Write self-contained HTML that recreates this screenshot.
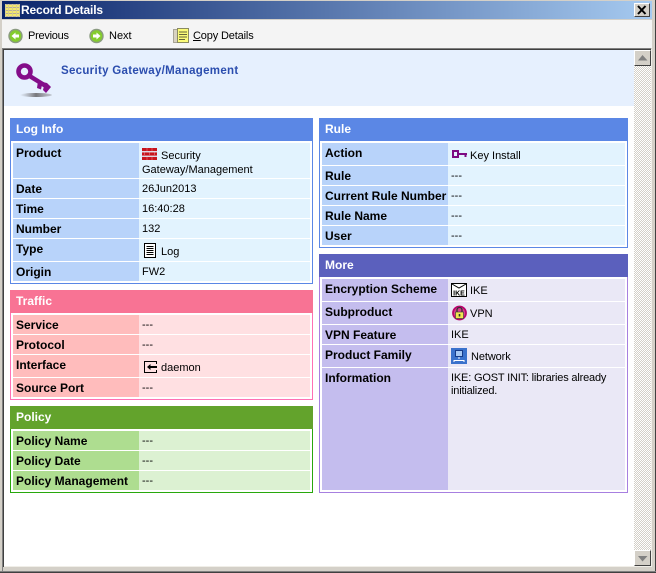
<!DOCTYPE html>
<html><head><meta charset="utf-8"><title>Record Details</title>
<style>
html,body{margin:0;padding:0}
body{width:656px;height:573px;position:relative;overflow:hidden;background:#d4d0c8;font-family:"Liberation Sans",sans-serif;font-size:11px;color:#000}
div,span,svg{position:absolute;display:block}
.h{color:#fff;font-weight:bold;font-size:12px;line-height:23px;padding-left:6px;box-sizing:border-box;height:23px}
.b{box-sizing:border-box;background:#fff;border:1px solid}
.l{font-weight:bold;font-size:12px;line-height:20px;padding-left:3px;box-sizing:border-box;white-space:nowrap}
.v{line-height:20px;padding-left:3px;box-sizing:border-box;font-size:11px;white-space:nowrap}
.t{white-space:nowrap;line-height:14px}
.bl{background:#b8d3fa}.bv{background:#e2f3fe}
.pl{background:#ffbcbc}.pv{background:#ffe0e2}
.gl{background:#aedd90}.gv{background:#dcf1d2}
.ml{background:#c4bdee}.mv{background:#eae8f6}
.btn{background:#d4d0c8;box-sizing:border-box;border:1px solid;border-color:#fff #404040 #404040 #fff}
</style></head><body>
<div style="left:0;top:0;width:656px;height:573px;background:#d4d0c8"></div>
<div style="left:655px;top:0;width:1px;height:573px;background:#404040"></div>
<div style="left:0;top:572px;width:656px;height:1px;background:#404040"></div>
<div style="left:0;top:571px;width:656px;height:1px;background:#808080"></div>
<div style="left:2px;top:1px;width:650px;height:18px;background:linear-gradient(90deg,#0a246a,#a6caf0)"></div>
<svg style="left:5px;top:4px" width="15" height="13" viewBox="0 0 15 13"><rect width="15" height="13" fill="#f4e96a"/><path d="M0 .5H15M0 3.5H15M0 6.5H15M0 9.5H15M0 12.5H15" stroke="#b9ae9a"/><path d="M.5 0V13M3.5 0V13M7.5 0V13M11.5 0V13M14.5 0V13" stroke="#d8cf8f"/></svg>
<div style="left:21px;top:3px;color:#fff;font-weight:bold;font-size:12px;line-height:14px;letter-spacing:-.15px;white-space:nowrap">Record Details</div>
<div class="btn" style="left:634px;top:3px;width:16px;height:14px"></div>
<svg style="left:636px;top:5px" width="12" height="10" viewBox="0 0 12 10"><path d="M2 1L9.5 9M9.5 1L2 9" stroke="#000" stroke-width="2"/></svg>

<div style="left:2px;top:20px;width:650px;height:28px;background:#f4f4f4"></div>
<svg style="left:8px;top:28px" width="15" height="16" viewBox="0 0 15 16"><circle cx="7.5" cy="8" r="7.2" fill="#8a9a80"/><circle cx="7.5" cy="8" r="5.8" fill="#84cc2e"/><path d="M3.5 8L7.5 4.5V6.5H11V9.5H7.5V11.5Z" fill="#fff"/></svg>
<div class="t" style="left:28px;top:29px;font-size:11px;letter-spacing:-.25px">Previous</div>
<svg style="left:89px;top:28px" width="15" height="16" viewBox="0 0 15 16"><circle cx="7.5" cy="8" r="7.2" fill="#8a9a80"/><circle cx="7.5" cy="8" r="5.8" fill="#84cc2e"/><path d="M11.5 8L7.5 4.5V6.5H4V9.5H7.5V11.5Z" fill="#fff"/></svg>
<div class="t" style="left:109px;top:29px;font-size:11px">Next</div>
<svg style="left:173px;top:28px" width="17" height="16" viewBox="0 0 17 16"><rect x=".5" y="1.5" width="14" height="13" fill="#d8d2c0" stroke="#a8a496"/><rect x="4.5" y=".5" width="11" height="14" fill="#fbfb78" stroke="#8b8b60"/><path d="M6 4H14M6 6.5H14M6 9H14M6 11.5H12" stroke="#66663a"/></svg>
<div class="t" style="left:193px;top:29px;font-size:11px;letter-spacing:-.15px"><u>C</u>opy Details</div>

<div style="left:2px;top:48px;width:649px;height:1px;background:#808080"></div>
<div style="left:3px;top:49px;width:648px;height:1px;background:#404040"></div>
<div style="left:2px;top:48px;width:1px;height:523px;background:#808080"></div>
<div style="left:3px;top:49px;width:1px;height:518px;background:#404040"></div>
<div style="left:4px;top:50px;width:647px;height:516px;background:#fff"></div>
<div style="left:651px;top:49px;width:1px;height:518px;background:#f0eee8"></div>
<div style="left:4px;top:566px;width:648px;height:1px;background:#f0eee8"></div>

<div style="left:4px;top:50px;width:630px;height:56px;background:#e6f0fe"></div>
<svg style="left:15px;top:62px" width="38" height="38" viewBox="0 0 38 38"><defs><linearGradient id="sh"><stop offset="0" stop-color="#8b8b90" stop-opacity="0"/><stop offset=".5" stop-color="#77777c"/><stop offset="1" stop-color="#8b8b90" stop-opacity=".4"/></linearGradient></defs><ellipse cx="21" cy="33" rx="16" ry="2" fill="url(#sh)"/><path d="M13 13L34 26" stroke="#840d8a" stroke-width="4.5"/><path d="M23 19L22 26L26 27.5L27 23L29 24L28 28L31 31L36 25L32 21Z" fill="#840d8a"/><circle cx="9.5" cy="9.5" r="6" fill="none" stroke="#840d8a" stroke-width="4.6"/></svg>
<div class="t" style="left:61px;top:64px;color:#2b4dae;font-weight:bold;font-size:11.5px;letter-spacing:.3px">Security Gateway/Management</div>

<div style="left:634px;top:50px;width:17px;height:516px;background:repeating-conic-gradient(#d4d0c8 0 25%,#fff 0 50%) 0 0/2px 2px"></div>
<div class="btn" style="left:634px;top:50px;width:17px;height:16px"></div>
<svg style="left:638px;top:55px" width="10" height="6" viewBox="0 0 10 6"><path d="M4.5 0L9.5 5.5H0Z" fill="#808080"/></svg>
<div class="btn" style="left:634px;top:550px;width:17px;height:16px"></div>
<svg style="left:638px;top:556px" width="10" height="6" viewBox="0 0 10 6"><path d="M0 0H9.5L4.5 5.5Z" fill="#808080"/></svg>

<!-- Log Info -->
<div class="b" style="left:10px;top:118px;width:303px;height:166px;border-color:#5b87e5"></div>
<div class="h" style="left:10px;top:118px;width:303px;background:#5b87e5">Log Info</div>
<div class="l bl" style="left:13px;top:143px;width:126px;height:35px">Product</div>
<div class="v bv" style="left:139px;top:143px;width:171px;height:35px"></div>
<svg style="left:142px;top:148px" width="15" height="12" viewBox="0 0 15 12"><rect width="15" height="12" fill="#e2f3fe"/><path d="M0 1.5H15M0 6H15M0 10.5H15" stroke="#c8141c" stroke-width="3.2"/><path d="M5 0V3M10 0V3M2.5 4.5V8M7.5 4.5V8M12.5 4.5V8M5 9V12M10 9V12" stroke="#e06068" stroke-width=".8"/></svg>
<div class="t" style="left:161px;top:149px">Security</div>
<div class="t" style="left:142px;top:163px">Gateway/Management</div>
<div class="l bl" style="left:13px;top:179px;width:126px;height:19px">Date</div><div class="v bv" style="left:139px;top:179px;width:171px;height:19px">26Jun2013</div>
<div class="l bl" style="left:13px;top:199px;width:126px;height:19px">Time</div><div class="v bv" style="left:139px;top:199px;width:171px;height:19px">16:40:28</div>
<div class="l bl" style="left:13px;top:219px;width:126px;height:19px">Number</div><div class="v bv" style="left:139px;top:219px;width:171px;height:19px">132</div>
<div class="l bl" style="left:13px;top:239px;width:126px;height:22px">Type</div><div class="v bv" style="left:139px;top:239px;width:171px;height:22px"></div>
<svg style="left:144px;top:243px" width="12" height="15" viewBox="0 0 12 15"><rect x=".5" y=".5" width="11" height="14" fill="#fff" stroke="#000"/><path d="M2.5 3.5H9.5M2.5 5.5H9.5M2.5 7.5H9.5M2.5 9.5H9.5M2.5 11.5H9.5" stroke="#000"/></svg>
<div class="t" style="left:161px;top:245px">Log</div>
<div class="l bl" style="left:13px;top:262px;width:126px;height:19px">Origin</div><div class="v bv" style="left:139px;top:262px;width:171px;height:19px">FW2</div>

<!-- Traffic -->
<div class="b" style="left:10px;top:290px;width:303px;height:110px;border-color:#ff70b4"></div>
<div class="h" style="left:10px;top:290px;width:303px;background:#f87394">Traffic</div>
<div class="l pl" style="left:13px;top:315px;width:126px;height:19px">Service</div><div class="v pv" style="left:139px;top:315px;width:171px;height:19px">---</div>
<div class="l pl" style="left:13px;top:335px;width:126px;height:19px">Protocol</div><div class="v pv" style="left:139px;top:335px;width:171px;height:19px">---</div>
<div class="l pl" style="left:13px;top:355px;width:126px;height:22px">Interface</div><div class="v pv" style="left:139px;top:355px;width:171px;height:22px"></div>
<svg style="left:144px;top:361px" width="13" height="12" viewBox="0 0 13 12"><path d="M12.5 3V.5H.5V11.5H12.5V9" fill="none" stroke="#000"/><path d="M3 6L6.5 3V5H13V7H6.5V9Z" fill="#000"/></svg>
<div class="t" style="left:161px;top:361px">daemon</div>
<div class="l pl" style="left:13px;top:378px;width:126px;height:19px">Source Port</div><div class="v pv" style="left:139px;top:378px;width:171px;height:19px">---</div>

<!-- Policy -->
<div class="b" style="left:10px;top:406px;width:303px;height:87px;border-color:#28a80c"></div>
<div class="h" style="left:10px;top:406px;width:303px;background:#63a32c">Policy</div>
<div class="l gl" style="left:13px;top:431px;width:126px;height:19px">Policy Name</div><div class="v gv" style="left:139px;top:431px;width:171px;height:19px">---</div>
<div class="l gl" style="left:13px;top:451px;width:126px;height:19px">Policy Date</div><div class="v gv" style="left:139px;top:451px;width:171px;height:19px">---</div>
<div class="l gl" style="left:13px;top:471px;width:126px;height:19px">Policy Management</div><div class="v gv" style="left:139px;top:471px;width:171px;height:19px">---</div>

<!-- Rule -->
<div class="b" style="left:319px;top:118px;width:309px;height:130px;border-color:#5b87e5"></div>
<div class="h" style="left:319px;top:118px;width:309px;background:#5b87e5">Rule</div>
<div class="l bl" style="left:322px;top:143px;width:126px;height:22px">Action</div><div class="v bv" style="left:448px;top:143px;width:177px;height:22px"></div>
<svg style="left:452px;top:150px" width="16" height="8" viewBox="0 0 16 8"><rect x="1" y="1" width="5" height="6" fill="none" stroke="#7d0a82" stroke-width="2"/><path d="M6 4H15M13.5 4V7" fill="none" stroke="#7d0a82" stroke-width="2"/></svg>
<div class="t" style="left:470px;top:149px">Key Install</div>
<div class="l bl" style="left:322px;top:166px;width:126px;height:19px">Rule</div><div class="v bv" style="left:448px;top:166px;width:177px;height:19px">---</div>
<div class="l bl" style="left:322px;top:186px;width:126px;height:19px">Current Rule Number</div><div class="v bv" style="left:448px;top:186px;width:177px;height:19px">---</div>
<div class="l bl" style="left:322px;top:206px;width:126px;height:19px">Rule Name</div><div class="v bv" style="left:448px;top:206px;width:177px;height:19px">---</div>
<div class="l bl" style="left:322px;top:226px;width:126px;height:19px">User</div><div class="v bv" style="left:448px;top:226px;width:177px;height:19px">---</div>

<!-- More -->
<div class="b" style="left:319px;top:254px;width:309px;height:239px;border-color:#a77fe0"></div>
<div class="h" style="left:319px;top:254px;width:309px;background:#5b60bd">More</div>
<div class="l ml" style="left:322px;top:279px;width:126px;height:22px">Encryption Scheme</div><div class="v mv" style="left:448px;top:279px;width:177px;height:22px"></div>
<svg style="left:451px;top:283px" width="16" height="14" viewBox="0 0 16 14"><rect x=".5" y=".5" width="15" height="13" fill="#fff" stroke="#000"/><path d="M1 1L8 5L15 1" fill="none" stroke="#000"/><text x="8" y="12.5" font-family="Liberation Sans" font-size="7" font-weight="bold" text-anchor="middle">IKE</text></svg>
<div class="t" style="left:470px;top:284px">IKE</div>
<div class="l ml" style="left:322px;top:302px;width:126px;height:22px">Subproduct</div><div class="v mv" style="left:448px;top:302px;width:177px;height:22px"></div>
<svg style="left:452px;top:305px" width="15" height="16" viewBox="0 0 15 16"><circle cx="7.5" cy="8" r="7.4" fill="#b8046c"/><circle cx="7.5" cy="8" r="5.6" fill="#d8408c"/><rect x="3.5" y="7" width="8" height="6.5" fill="#f0e650" stroke="#444" stroke-width=".7"/><path d="M5 7V5A2.5 2.5 0 0 1 10 5V7" fill="none" stroke="#333" stroke-width="1.3"/><rect x="6.7" y="9" width="1.6" height="2.5" fill="#333"/></svg>
<div class="t" style="left:470px;top:307px">VPN</div>
<div class="l ml" style="left:322px;top:325px;width:126px;height:19px">VPN Feature</div><div class="v mv" style="left:448px;top:325px;width:177px;height:19px">IKE</div>
<div class="l ml" style="left:322px;top:345px;width:126px;height:22px">Product Family</div><div class="v mv" style="left:448px;top:345px;width:177px;height:22px"></div>
<svg style="left:451px;top:348px" width="16" height="16" viewBox="0 0 16 16"><rect width="16" height="16" fill="#3a72cc"/><rect x="4.5" y="2.5" width="7" height="6" fill="#a6c8f4" stroke="#143a88"/><path d="M8 9V11M3 12.5H13M3 12V14M13 12V14" stroke="#fff"/></svg>
<div class="t" style="left:471px;top:350px;letter-spacing:-.1px">Network</div>
<div class="l ml" style="left:322px;top:368px;width:126px;height:122px">Information</div><div class="mv" style="left:448px;top:368px;width:177px;height:122px"></div>
<div class="t" style="left:451px;top:372px;line-height:13px;letter-spacing:-.18px">IKE: GOST INIT: libraries already<br>initialized.</div>
</body></html>
